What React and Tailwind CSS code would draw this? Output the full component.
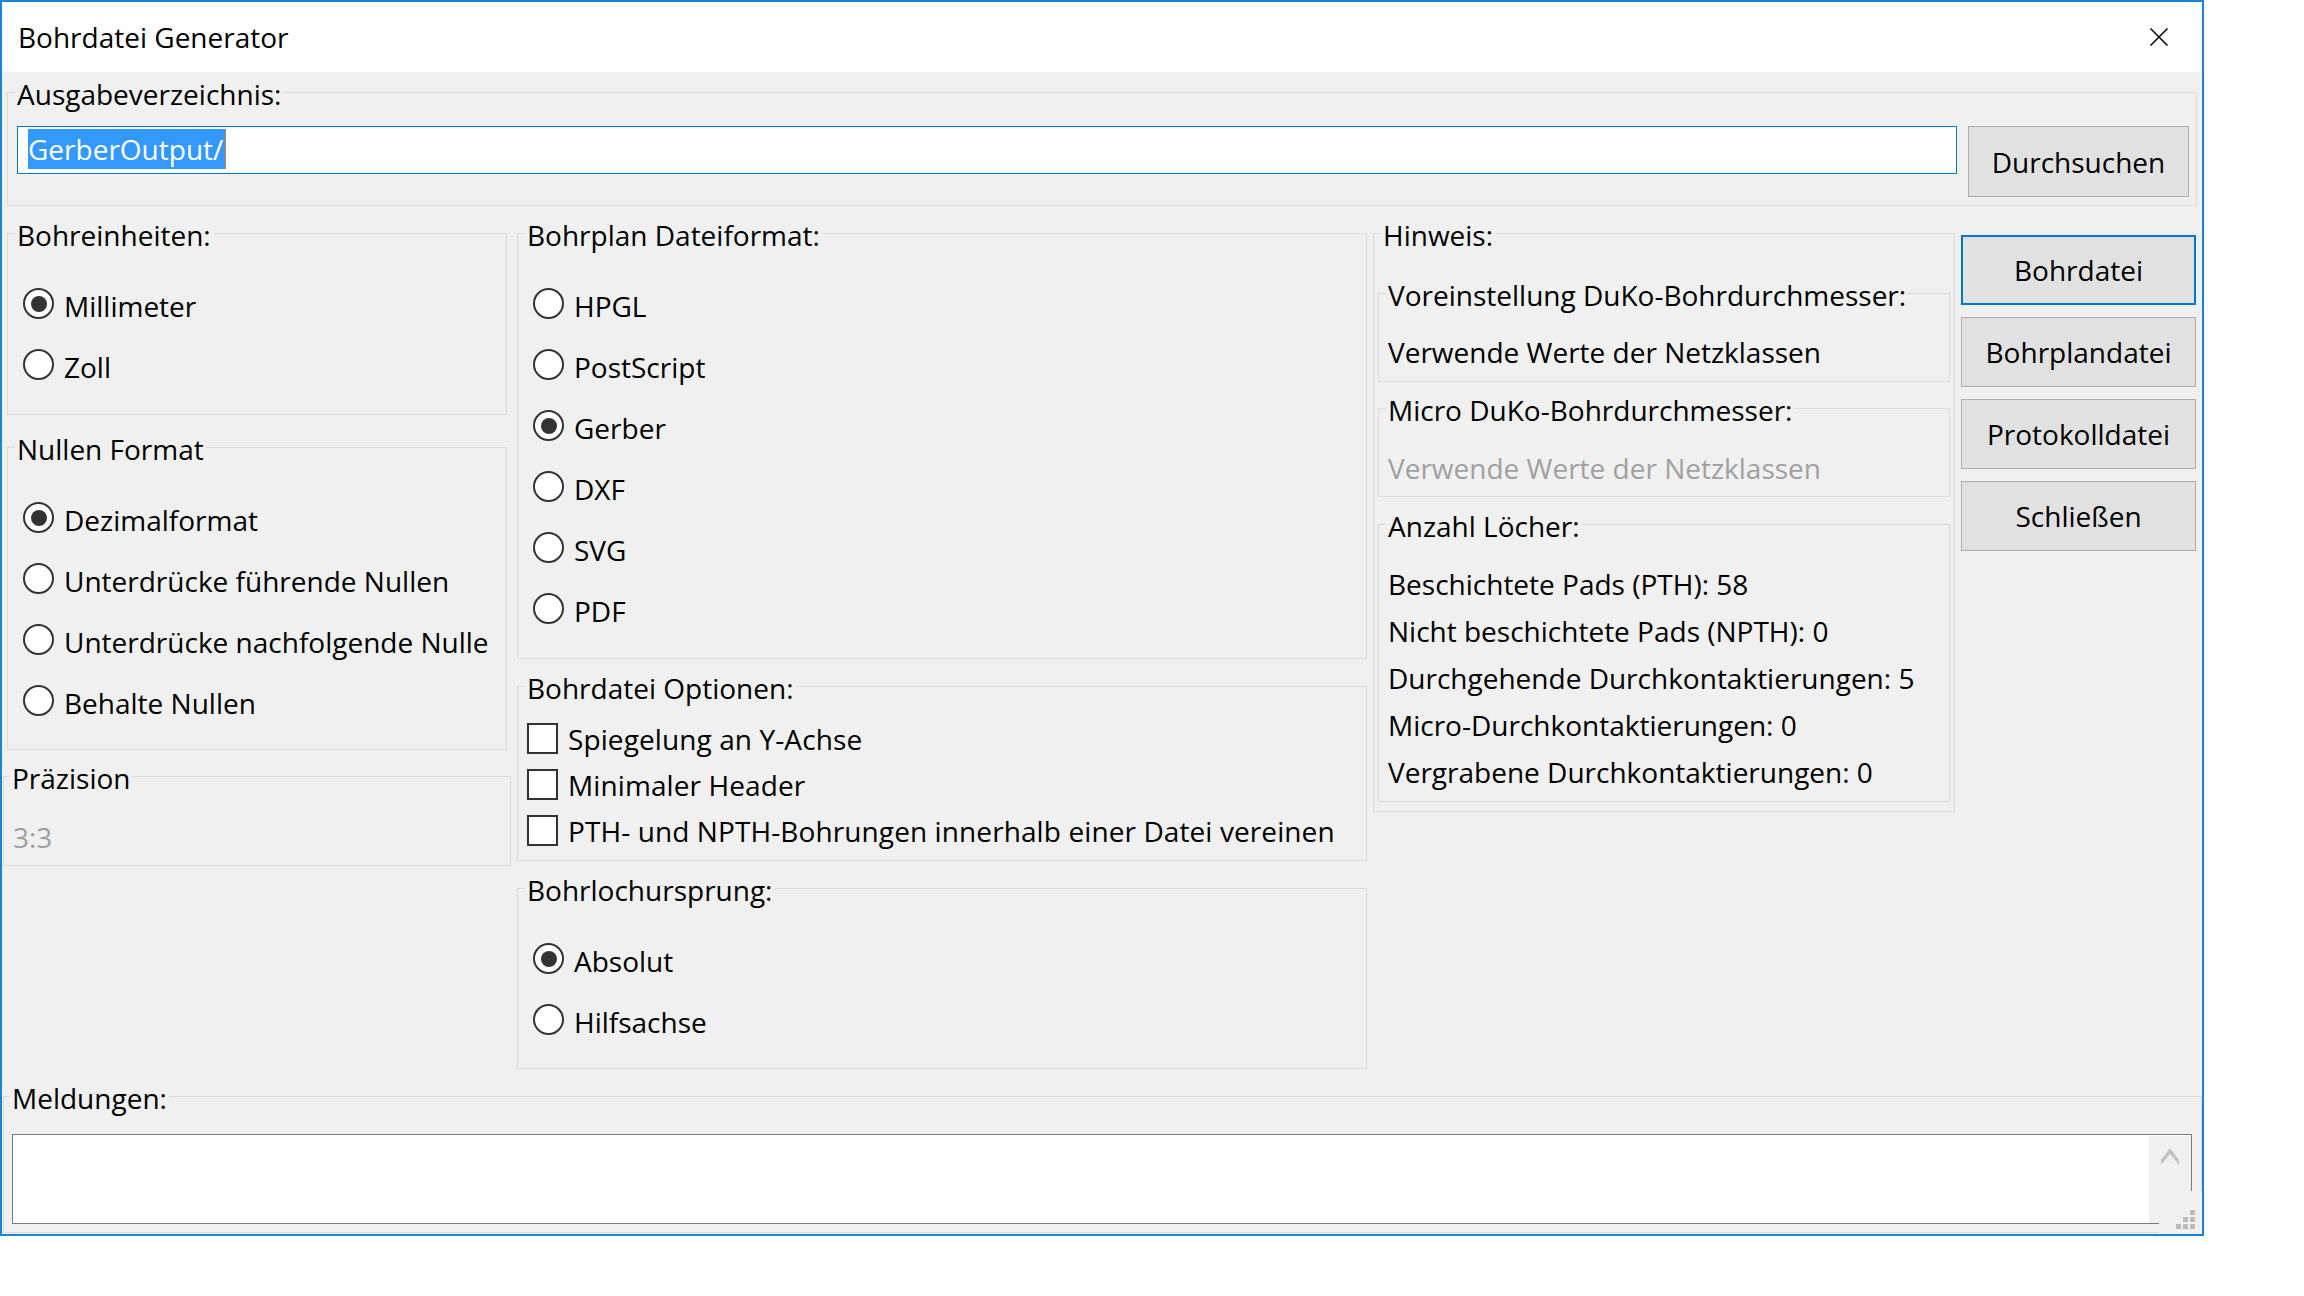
import React from "react";

function Group({ label, className = "", labelLeft = "left-[7px]", children }) {
  return (
    <div className={`relative shrink-0 border border-[#dcdcdc] ${className}`}>
      <span
        className={`absolute -top-[18px] ${labelLeft} px-[2px] bg-[#f0f0f0] leading-[38px] whitespace-nowrap`}
      >
        {label}
      </span>
      {children}
    </div>
  );
}

function Radio({ checked = false, label, textClass = "" }) {
  return (
    <div className="flex items-start h-[31px] gap-[10px]">
      <span className="w-[31px] h-[31px] shrink-0 rounded-full border-2 border-[#333333] bg-white flex items-center justify-center">
        {checked && <span className="w-[16px] h-[16px] rounded-full bg-[#333333]" />}
      </span>
      <span className={`leading-[38px] -mt-[1px] whitespace-nowrap ${textClass}`}>{label}</span>
    </div>
  );
}

function Check({ label }) {
  return (
    <div className="flex items-start h-[31px] gap-[10px]">
      <span className="w-[31px] h-[31px] shrink-0 border-2 border-[#333333] bg-white" />
      <span className="leading-[38px] -mt-[3px] whitespace-nowrap tracking-[0.1px]">{label}</span>
    </div>
  );
}

function Btn({ children, primary = false }) {
  return (
    <button
      className={`w-full h-[70px] bg-[#e1e1e1] leading-[38px] text-black ${
        primary ? "border-2 border-[#0078d7]" : "border border-[#adadad]"
      }`}
    >
      {children}
    </button>
  );
}

export default function App() {
  return (
    <div className="w-[2304px] h-[1296px] bg-white font-['Open_Sans','Noto_Sans',sans-serif] text-[28px] text-black overflow-hidden">
      <div className="w-[2204px] h-[1236px] border-2 border-[#1883d7] flex flex-col bg-[#f0f0f0]">
        {/* Title bar */}
        <div className="h-[70px] shrink-0 bg-white flex items-center justify-between pl-[16px] pr-[33px]">
          <span className="leading-[38px]">Bohrdatei Generator</span>
          <svg width="20" height="18" viewBox="0 0 20 18" aria-label="Schließen">
            <path d="M1.5 0.5 L18.5 17.5 M18.5 0.5 L1.5 17.5" stroke="#111" strokeWidth="1.6" fill="none" />
          </svg>
        </div>

        {/* Body */}
        <div className="flex-1 flex flex-col">
          <Group
            label="Ausgabeverzeichnis:"
            className="mt-[20px] ml-[5px] w-[2190px] h-[114px] pt-[33px] pl-[9px] pr-[7px]"
          >
            <div className="flex items-start gap-[11px]">
              <div className="flex-1 h-[48px] border border-[#0078d7] bg-white pl-[10px] pt-[2px] flex items-start">
                <span className="bg-[#3399ff] text-white leading-[40px] pr-[2px] border-r border-[#d0802c]">
                  GerberOutput/
                </span>
              </div>
              <button className="w-[221px] h-[71px] shrink-0 bg-[#e1e1e1] border border-[#adadad] leading-[38px]">
                Durchsuchen
              </button>
            </div>
          </Group>

          <div className="flex items-start">
            {/* Column A */}
            <div className="w-[510px] shrink-0 flex flex-col items-start">
              <Group label="Bohreinheiten:" className="mt-[27px] ml-[5px] w-[500px] h-[182px]">
                <div className="flex flex-col gap-[30px] pt-[54px] pl-[15px]">
                  <Radio checked label="Millimeter" />
                  <Radio label="Zoll" />
                </div>
              </Group>
              <Group label="Nullen Format" className="mt-[32px] ml-[5px] w-[500px] h-[303px]">
                <div className="flex flex-col gap-[30px] pt-[54px] pl-[15px]">
                  <Radio checked label="Dezimalformat" />
                  <Radio label="Unterdrücke führende Nullen" />
                  <Radio
                    label="Unterdrücke nachfolgende Nullen"
                    textClass="max-w-[426px] overflow-hidden"
                  />
                  <Radio label="Behalte Nullen" />
                </div>
              </Group>
              <Group
                label="Präzision"
                labelLeft="left-[6px]"
                className="mt-[26px] ml-[1px] w-[508px] h-[90px]"
              >
                <div className="pt-[41px] pl-[9px] leading-[38px] text-[#a0a0a0]">3:3</div>
              </Group>
            </div>

            {/* Column B */}
            <div className="w-[855px] shrink-0 flex flex-col items-start">
              <Group label="Bohrplan Dateiformat:" className="mt-[27px] ml-[5px] w-[850px] h-[426px]">
                <div className="flex flex-col gap-[30px] pt-[54px] pl-[15px]">
                  <Radio label="HPGL" />
                  <Radio label="PostScript" />
                  <Radio checked label="Gerber" />
                  <Radio label="DXF" />
                  <Radio label="SVG" />
                  <Radio label="PDF" />
                </div>
              </Group>
              <Group label="Bohrdatei Optionen:" className="mt-[27px] ml-[5px] w-[850px] h-[175px]">
                <div className="flex flex-col gap-[15px] pt-[36px] pl-[9px]">
                  <Check label="Spiegelung an Y-Achse" />
                  <Check label="Minimaler Header" />
                  <Check label="PTH- und NPTH-Bohrungen innerhalb einer Datei vereinen" />
                </div>
              </Group>
              <Group label="Bohrlochursprung:" className="mt-[27px] ml-[5px] w-[850px] h-[181px]">
                <div className="flex flex-col gap-[30px] pt-[54px] pl-[15px]">
                  <Radio checked label="Absolut" />
                  <Radio label="Hilfsachse" />
                </div>
              </Group>
            </div>

            {/* Column C */}
            <div className="w-[588px] shrink-0 flex flex-col items-start">
              <Group label="Hinweis:" className="mt-[27px] ml-[6px] w-[582px] h-[579px] pl-[4px]">
                <Group
                  label="Voreinstellung DuKo-Bohrdurchmesser:"
                  className="mt-[59px] w-[572px] h-[89px]"
                >
                  <div className="pt-[39px] pl-[9px] leading-[38px] whitespace-nowrap">
                    Verwende Werte der Netzklassen
                  </div>
                </Group>
                <Group label="Micro DuKo-Bohrdurchmesser:" className="mt-[26px] w-[572px] h-[89px]">
                  <div className="pt-[40px] pl-[9px] leading-[38px] whitespace-nowrap text-[#a0a0a0]">
                    Verwende Werte der Netzklassen
                  </div>
                </Group>
                <Group label="Anzahl Löcher:" className="mt-[27px] w-[572px] h-[278px]">
                  <div className="pt-[36px] pl-[9px] leading-[47px] whitespace-nowrap flex flex-col">
                    <span>Beschichtete Pads (PTH): 58</span>
                    <span>Nicht beschichtete Pads (NPTH): 0</span>
                    <span>Durchgehende Durchkontaktierungen: 5</span>
                    <span>Micro-Durchkontaktierungen: 0</span>
                    <span>Vergrabene Durchkontaktierungen: 0</span>
                  </div>
                </Group>
              </Group>
            </div>

            {/* Column D: buttons */}
            <div className="w-[235px] ml-[6px] mt-[29px] shrink-0 flex flex-col gap-[12px]">
              <Btn primary>Bohrdatei</Btn>
              <Btn>Bohrplandatei</Btn>
              <Btn>Protokolldatei</Btn>
              <Btn>Schließen</Btn>
            </div>
          </div>

          {/* Meldungen */}
          <Group
            label="Meldungen:"
            labelLeft="left-[6px]"
            className="mt-[27px] ml-[1px] w-[2199px] h-[137px] pt-[37px] pl-[8px]"
          >
            <div className="w-[2180px] h-[90px] border border-[#7a7a7a] bg-white flex">
              <div className="flex-1" />
              <div className="w-[42px] mt-[1px] bg-[#f0f0f0] flex justify-center pt-[12px]">
                <svg width="18" height="17" viewBox="0 0 18 17">
                  <polygon points="9,0 18,12 18,17 9,6 0,17 0,12" fill="#c3c3c3" />
                </svg>
              </div>
            </div>
            <div className="absolute -right-[1px] -bottom-[1px] w-[43px] h-[42px] bg-[#f0f0f0]">
              <svg width="43" height="42" viewBox="0 0 43 42">
                <g fill="#bcbcbc">
                  <rect x="31" y="19" width="5" height="5" />
                  <rect x="24" y="26" width="5" height="5" />
                  <rect x="31" y="26" width="5" height="5" />
                  <rect x="17" y="33" width="5" height="5" />
                  <rect x="24" y="33" width="5" height="5" />
                  <rect x="31" y="33" width="5" height="5" />
                </g>
              </svg>
            </div>
          </Group>
        </div>
      </div>
    </div>
  );
}
